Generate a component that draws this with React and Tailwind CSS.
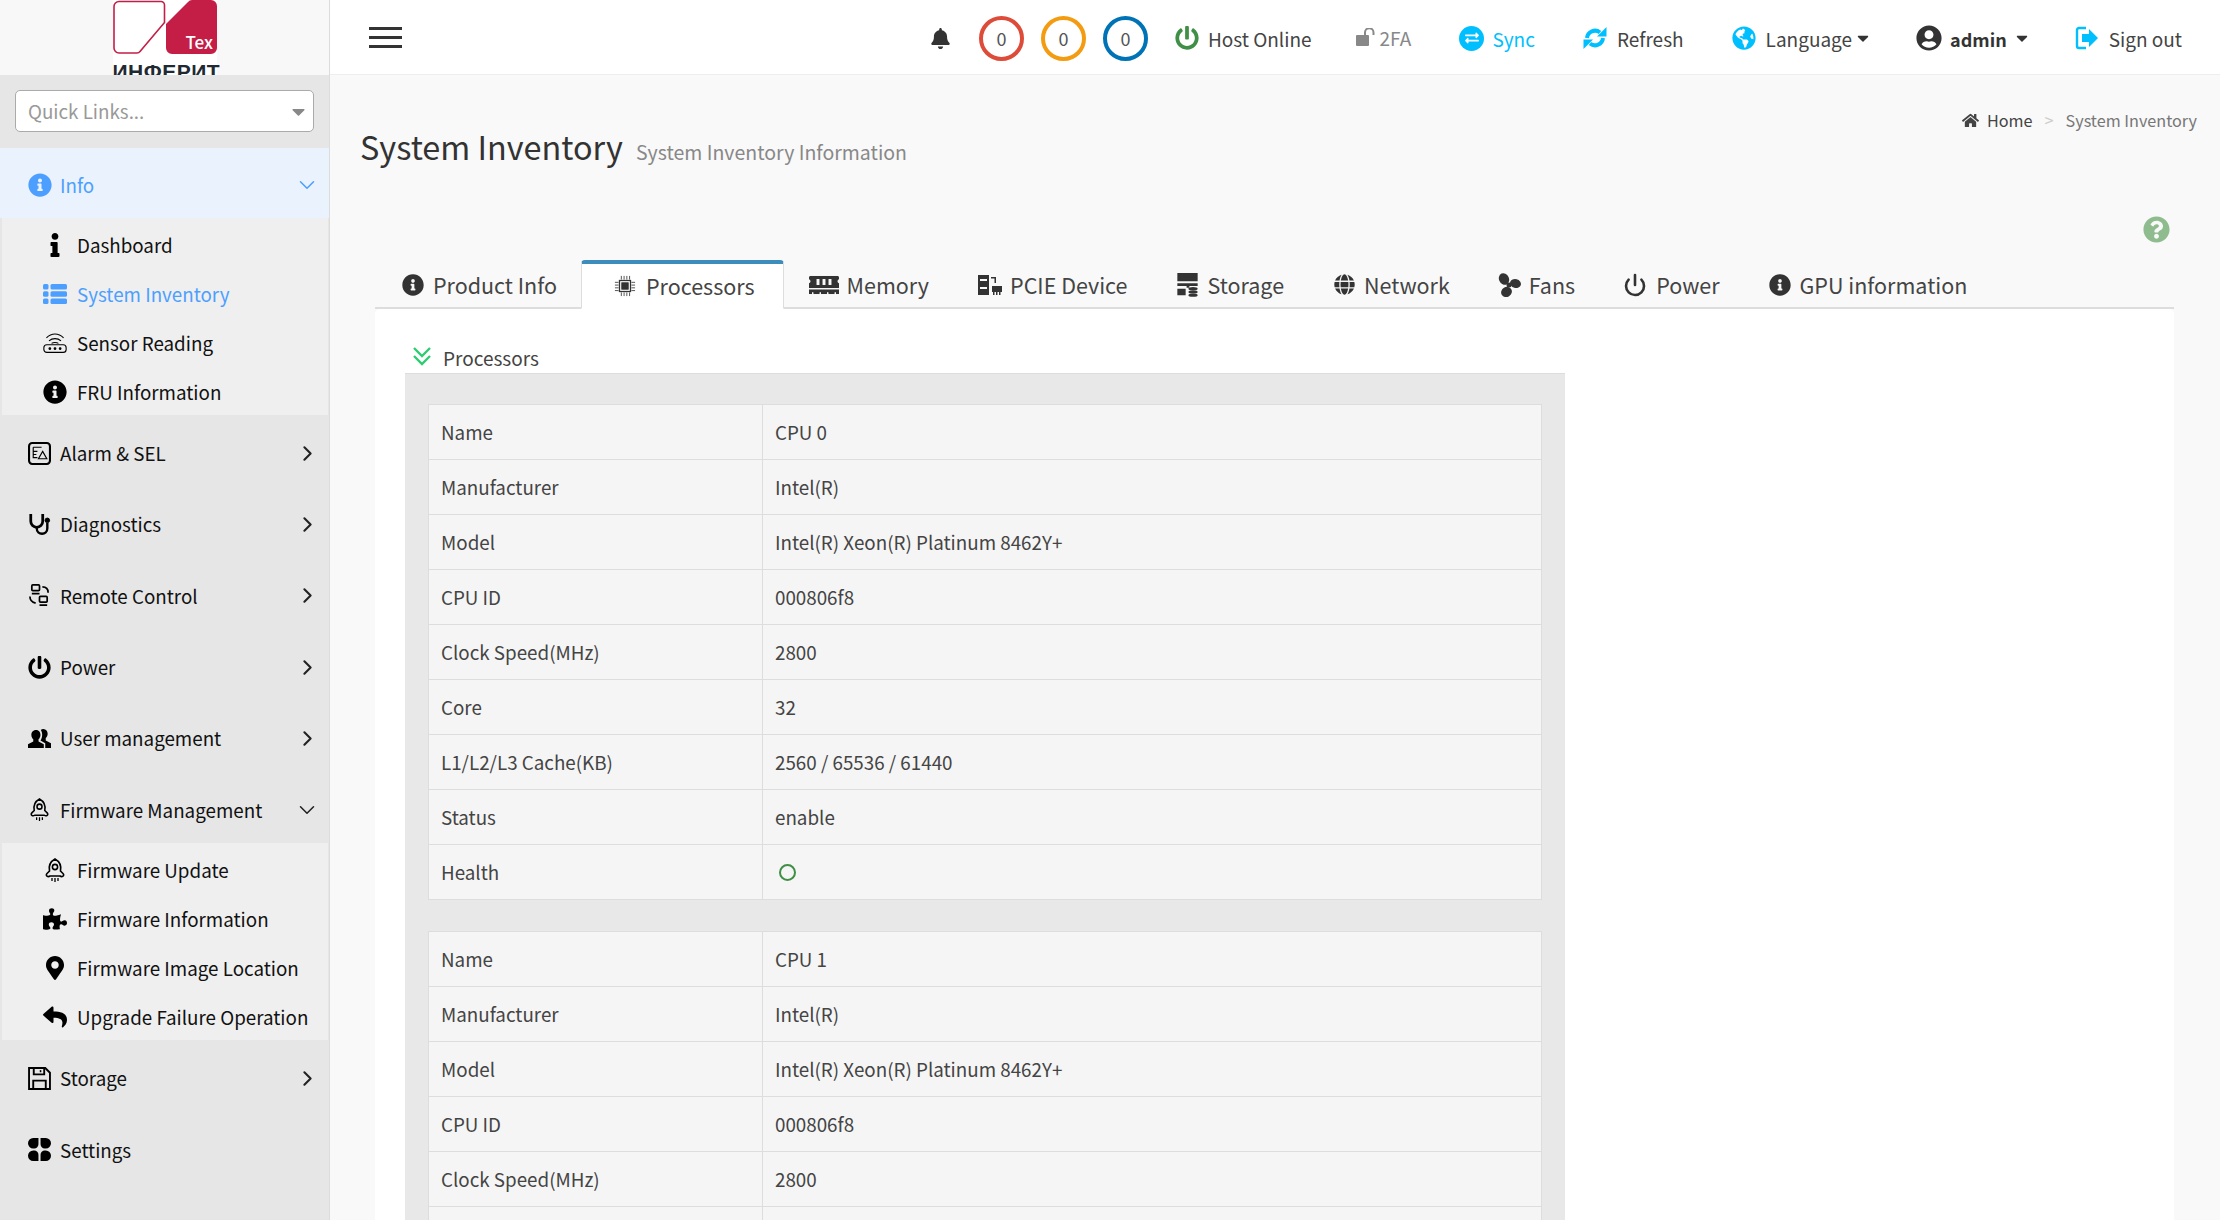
import React from 'react';
import {
  FaInfoCircle, FaInfo, FaBell, FaPowerOff, FaExchangeAlt,
  FaGlobeAmericas, FaUserCircle, FaHome, FaQuestionCircle, FaMemory, FaGlobe,
  FaPuzzlePiece, FaMapMarkerAlt, FaReply, FaCaretDown,
} from 'react-icons/fa';
import { ChevronDown, ChevronRight, Power } from 'lucide-react';

const ListIcon = (props) => (
  <svg viewBox="0 0 24 24" fill="currentColor" {...props}>
    <rect x="0" y="2" width="5.500" height="5.500" rx="1.500" />
    <rect x="7.500" y="2" width="16.500" height="5.500" rx="1.500" />
    <rect x="0" y="9.300" width="5.500" height="5.500" rx="1.500" />
    <rect x="7.500" y="9.300" width="16.500" height="5.500" rx="1.500" />
    <rect x="0" y="16.500" width="5.500" height="5.500" rx="1.500" />
    <rect x="7.500" y="16.500" width="16.500" height="5.500" rx="1.500" />
  </svg>
);

const RouterIcon = (props) => (
  <svg viewBox="0 0 28 24" fill="none" stroke="currentColor" strokeWidth="1.300" {...props}>
    <rect x="1" y="14" width="26" height="9" rx="3.500" />
    <circle cx="8" cy="18.500" r="1" fill="currentColor" />
    <circle cx="14" cy="18.500" r="1" fill="currentColor" />
    <circle cx="20" cy="18.500" r="1" fill="currentColor" />
    <path d="M7 9.500c4-3.500 10-3.500 14 0M4 6c6-6 14-6 20 0M10 12.500c2-1.500 6-1.500 8 0" />
  </svg>
);

const AlarmIcon = (props) => (
  <svg viewBox="0 0 22 22" fill="none" stroke="currentColor" {...props}>
    <rect x="1" y="1" width="20" height="20" rx="3" strokeWidth="2" />
    <path d="M5 5h8M5 5v10h4M5 9h4M5 12h3" strokeWidth="1.100" />
    <path d="M14 9l4 7h-8z" strokeWidth="1.100" />
  </svg>
);

const StethIcon = (props) => (
  <svg viewBox="0 0 24 25" fill="none" stroke="currentColor" strokeWidth="3" {...props}>
    <path d="M2.500 1v8a6.500 6.500 0 0 0 13 0V1" />
    <path d="M9 15.500v1c0 8 11.500 8 11.500 0V11" strokeWidth="2.600" />
    <circle cx="20.500" cy="8" r="2.500" fill="currentColor" strokeWidth="1" />
  </svg>
);

const RemoteIcon = (props) => (
  <svg viewBox="0 0 22 24" fill="none" stroke="currentColor" strokeWidth="1.800" {...props}>
    <rect x="3" y="1" width="8" height="6" rx="1" />
    <rect x="11" y="13" width="8" height="6" rx="1" />
    <path d="M3 10h8M11 22h8M14 3c4 0 6 2 6 6M1 13c0 4 2 6 6 7" />
  </svg>
);

const RocketIcon = (props) => (
  <svg viewBox="0 0 22 24" fill="none" stroke="currentColor" strokeWidth="1.600" {...props}>
    <path d="M11 1c4.500 2.500 6.500 7 5.500 12l2.500 2.500c2 2-1 4-3 2.500H6C4 19.500 1 17.500 3 15.500L5.500 13C4.500 8 6.500 3.500 11 1z" />
    <circle cx="11" cy="9" r="2.600" />
    <path d="M8 20v3M11 20v4M14 20v3" strokeWidth="1.300" />
  </svg>
);

const PetalsIcon = (props) => (
  <svg viewBox="0 0 22 22" fill="currentColor" {...props}>
    <path d="M5 0h5v6a4 4 0 0 1-4 4H5a5 5 0 0 1 0-10zM17 0a5 5 0 0 1 0 10h-1a4 4 0 0 1-4-4V0zM5 22a5 5 0 0 1 0-10h1a4 4 0 0 1 4 4v6zM17 22h-5v-6a4 4 0 0 1 4-4h1a5 5 0 0 1 0 10z" />
  </svg>
);

const FloppyIcon = (props) => (
  <svg viewBox="0 0 22 22" fill="none" stroke="currentColor" strokeWidth="1.800" {...props}>
    <path d="M1 1h15.500L21 5.500V21H1z" />
    <path d="M5.500 1v6h10V1M5 21v-8h12v8" />
    <path d="M12 3v2" strokeWidth="1.500" />
  </svg>
);

const UsersIcon = (props) => (
  <svg viewBox="0 0 24 22" fill="currentColor" {...props}>
    <g transform="translate(24 0) scale(-1 1)">
      <path d="M15.500 2c-3 0-4.500 2.500-4.500 5 0 2 .8 3.700 2 4.800V14l-5.500 3v4H24v-4l-5.500-3v-2.200c1.200-1.100 2-2.800 2-4.800 0-2.500-1.500-5-5-5z" />
      <path d="M8 1C5 1 3.500 3.300 3.500 6c0 2 .8 3.500 2 4.500V13L0 16v5h6v-5l5-3c-1-1.300-1.800-3.500-1.800-6 0-2 .5-3.500 1.500-5C10 1.300 9 1 8 1z" />
    </g>
  </svg>
);

const ChipIcon = (props) => (
  <svg viewBox="0 0 24 24" fill="none" stroke="currentColor" {...props}>
    <rect x="6" y="6" width="12" height="12" strokeWidth="1.400" />
    <rect x="8.500" y="8.500" width="7" height="7" fill="currentColor" />
    <path d="M8 1v4M11 1v4M14 1v4M17 1v4M8 19v4M11 19v4M14 19v4M17 19v4M1 8h4M1 11h4M1 14h4M1 17h4M19 8h4M19 11h4M19 14h4M19 17h4" strokeWidth="0.900" />
  </svg>
);

const PcieIcon = (props) => (
  <svg viewBox="0 0 24 20" fill="currentColor" {...props}>
    <path d="M0 0h11v20H0zM2 4v2h7V4zM2 12v2h7v-2z" fillRule="evenodd" />
    <path d="M14 11h10v6H14z" />
    <path d="M13 2h5v6h-1.500V3.500H13zM15 17h1.500v3H15zM18 17h1.500v3H18zM21 17h1.500v3H21z" />
  </svg>
);

const StorageIcon = (props) => (
  <svg viewBox="0 0 24 26" fill="currentColor" {...props}>
    <path d="M1 0h22v9H1zM1 11h22v3H14v2h-3v-2H1zM1 17h9v7H1z" />
    <ellipse cx="18" cy="17" rx="5" ry="1.800" />
    <ellipse cx="18" cy="20.500" rx="5" ry="1.800" />
    <ellipse cx="18" cy="24" rx="5" ry="1.800" />
  </svg>
);

const FanIcon = (props) => (
  <svg viewBox="0 0 24 24" fill="currentColor" {...props}>
    <circle cx="12" cy="12" r="2.500" />
    <ellipse cx="7" cy="6" rx="5" ry="6" transform="rotate(-25 7 6)" />
    <ellipse cx="18.500" cy="10.500" rx="5.500" ry="4.500" transform="rotate(15 18.500 10.500)" />
    <ellipse cx="9.500" cy="19" rx="5.500" ry="5" transform="rotate(-30 9.500 19)" />
  </svg>
);

const RefreshIcon = (props) => (
  <svg viewBox="0 0 24 24" {...props}>
    <path d="M4 12A8 8 0 0 1 17 6.500M20 12A8 8 0 0 1 7 17.500" fill="none" stroke="currentColor" strokeWidth="4" />
    <path d="M14 10.500h9.500V1zM10 13.500H.5V23z" fill="currentColor" />
  </svg>
);

const SignOutIcon = (props) => (
  <svg viewBox="0 0 24 24" fill="none" {...props}>
    <path d="M11 2H4a2 2 0 0 0-2 2v16a2 2 0 0 0 2 2h7" stroke="currentColor" strokeWidth="2.400" />
    <path d="M7 8h7V3l9 9-9 9v-5H7z" fill="currentColor" />
  </svg>
);

const LockOpenIcon = (props) => (
  <svg viewBox="0 0 19 18" fill="none" {...props}>
    <rect x="0" y="7" width="13" height="11" rx="1" fill="currentColor" />
    <path d="M9 7V4.500a4 4 0 0 1 8.500 0V7" stroke="currentColor" strokeWidth="2" />
  </svg>
);

const DoubleChevronIcon = (props) => (
  <svg viewBox="0 0 20 20" fill="none" stroke="currentColor" strokeWidth="2.400" {...props}>
    <path d="M2 2l8 8 8-8M2 10l8 8 8-8" />
  </svg>
);

const mainMenu = [
  { label: 'Alarm & SEL', icon: AlarmIcon },
  { label: 'Diagnostics', icon: StethIcon },
  { label: 'Remote Control', icon: RemoteIcon },
  { label: 'Power', icon: FaPowerOff },
  { label: 'User management', icon: UsersIcon },
];

const infoItems = [
  { label: 'Dashboard', icon: FaInfo },
  { label: 'System Inventory', icon: ListIcon, active: true },
  { label: 'Sensor Reading', icon: RouterIcon },
  { label: 'FRU Information', icon: FaInfoCircle },
];

const firmwareItems = [
  { label: 'Firmware Update', icon: RocketIcon },
  { label: 'Firmware Information', icon: FaPuzzlePiece },
  { label: 'Firmware Image Location', icon: FaMapMarkerAlt },
  { label: 'Upgrade Failure Operation', icon: FaReply },
];

const tabs = [
  { label: 'Product Info', icon: FaInfoCircle, size: 'w-[22px] h-[22px] mr-[9px]', pad: 'pl-[25px] pr-[24px]' },
  { label: 'Processors', icon: ChipIcon, size: 'w-[22px] h-[22px] mr-[10px]', active: true },
  { label: 'Memory', icon: FaMemory, size: 'w-[30px] h-[24px] mr-[8px]', pad: 'pl-[25px] pr-[24px]' },
  { label: 'PCIE Device', icon: PcieIcon, size: 'w-[24px] h-[20px] mr-[8px]', pad: 'px-[25px]' },
  { label: 'Storage', icon: StorageIcon, size: 'w-[23px] h-[24px] mr-[8px]', pad: 'pl-[24px] pr-[25px]' },
  { label: 'Network', icon: FaGlobe, size: 'w-[21px] h-[21px] mr-[9px]', pad: 'pl-[25px] pr-[24px]' },
  { label: 'Fans', icon: FanIcon, size: 'w-[24px] h-[24px] mr-[8px]', pad: 'pl-[23px] pr-[24px]' },
  { label: 'Power', icon: Power, size: 'w-[24px] h-[24px] mr-[9px]', pad: 'pl-[24px] pr-[25px]' },
  { label: 'GPU information', icon: FaInfoCircle, size: 'w-[22px] h-[22px] mr-[9px]', pad: 'pl-[24px] pr-[25px]' },
];

const cpuRows = (name) => [
  ['Name', name],
  ['Manufacturer', 'Intel(R)'],
  ['Model', 'Intel(R) Xeon(R) Platinum 8462Y+'],
  ['CPU ID', '000806f8'],
  ['Clock Speed(MHz)', '2800'],
  ['Core', '32'],
  ['L1/L2/L3 Cache(KB)', '2560 / 65536 / 61440'],
  ['Status', 'enable'],
  ['Health', null],
];

const MenuRow = ({ label, icon: Icon, open, last }) => (
  <div className={`flex items-center pl-[28px] pr-[9px] pt-[5px] ${last ? 'h-[72px]' : 'h-[71.3px]'}`}>
    <span className="w-[32px] shrink-0">
      <Icon className="w-[23px] h-[23px] text-black" />
    </span>
    <span className="flex-1 text-[#111]">{label}</span>
    {label !== 'Settings' && (open
      ? <ChevronDown className="w-[26px] h-[26px] text-[#222]" strokeWidth={1.4} />
      : <ChevronRight className="w-[25px] h-[25px] text-[#222]" strokeWidth={2} />)}
  </div>
);

const SubMenu = ({ items, top }) => (
  <div className={`ml-[2px] mr-px h-[197px] bg-[#efefef] ${top}`}>
    {items.map((item) => (
      <div key={item.label} className="flex items-center h-[49px] pl-[39px]">
        <span className="w-[28px] mr-[8px] shrink-0 flex justify-center">
          <item.icon className={`w-[24px] h-[24px] ${item.active ? 'text-[#4d9fff]' : 'text-black'}`} />
        </span>
        <span className={item.active ? 'text-[#4d9fff]' : 'text-[#111]'}>{item.label}</span>
      </div>
    ))}
  </div>
);

const Sidebar = () => (
  <aside className="w-[330px] shrink-0 bg-[#e6e6e6] border-r border-[#dcdcdc] text-[18.8px] leading-[26px]">
    <div className="h-[75px] bg-[#f8f8f8] flex justify-center overflow-hidden">
      <div className="relative w-[104px] h-[75px] bg-white">
        <svg viewBox="0 0 104 54" className="w-[104px] h-[54px]">
          <path d="M6 1.500h42a3.500 3.500 0 0 1 3.500 3.500v17.500L27 51.500a4 4 0 0 1-3 1.500H6a5 5 0 0 1-5-5V6.500a5 5 0 0 1 5-5z" fill="#fff" stroke="#c41e47" strokeWidth="1.600" />
          <path d="M53 24L75 2a6 6 0 0 1 4-2h19a6 6 0 0 1 6 6v42a6 6 0 0 1-6 6H59a6 6 0 0 1-6-6z" fill="#c41e47" />
        </svg>
        <span className="absolute left-[73px] top-[32px] text-[17px] leading-[20px] font-medium text-white">Tex</span>
        <span className="absolute left-0 top-[60px] w-[104px] text-center text-[21px] leading-[24px] font-bold tracking-[0.5px] text-[#1f2a33] font-['Liberation_Sans',sans-serif]">ИНФЕРИТ</span>
      </div>
    </div>
    <div className="h-[73px] pt-[15px] px-[15px]">
      <div className="h-[42px] bg-white border border-[#aaa] rounded-[5px] flex items-center justify-between pl-[12px] pr-[4px] text-[#999]">
        <span>Quick Links...</span>
        <FaCaretDown className="w-[21px] h-[21px] text-[#888]" />
      </div>
    </div>
    <div className="h-[70px] pt-[4px] pl-[28px] pr-[9px] flex items-center bg-[#eaf2fe] text-[#4d9fff]">
      <FaInfoCircle className="w-[24px] h-[24px] mr-[8px]" />
      <span className="flex-1">Info</span>
      <ChevronDown className="w-[26px] h-[26px]" strokeWidth={1.4} />
    </div>
    <SubMenu items={infoItems} top="pt-[2px]" />
    {mainMenu.map((m) => <MenuRow key={m.label} {...m} />)}
    <MenuRow label="Firmware Management" icon={RocketIcon} open />
    <SubMenu items={firmwareItems} top="pt-[3px]" />
    <MenuRow label="Storage" icon={FloppyIcon} last />
    <MenuRow label="Settings" icon={PetalsIcon} />
  </aside>
);

const Counter = ({ color }) => (
  <span className={`w-[45px] h-[45px] rounded-full border-[4px] flex items-center justify-center text-[18px] text-[#555] ${color}`}>0</span>
);

const Topbar = () => (
  <header className="h-[75px] shrink-0 bg-white border-b border-[#eee] flex items-center pl-[39px] pr-[38px] text-[19px] leading-[26px] text-[#444]">
    <div className="flex flex-col gap-[6px]">
      <span className="block w-[33px] h-[3px] bg-[#333]"></span>
      <span className="block w-[33px] h-[3px] bg-[#333]"></span>
      <span className="block w-[33px] h-[3px] bg-[#333]"></span>
    </div>
    <div className="ml-auto flex items-center mt-[2px]">
      <FaBell className="w-[19px] h-[21px] text-[#333] mr-[29px]" />
      <div className="flex gap-[17px] mr-[27px]">
        <Counter color="border-[#dd4b39]" />
        <Counter color="border-[#f39c12]" />
        <Counter color="border-[#0073b7]" />
      </div>
      <FaPowerOff className="w-[24px] h-[24px] text-[#3f8f46] mr-[9px]" />
      <span className="mr-[44px] mt-[2px]">Host Online</span>
      <LockOpenIcon className="w-[19px] h-[18px] text-[#888] mr-[5px] -mt-[3px]" />
      <span className="text-[#888] mr-[48px]">2FA</span>
      <span className="w-[25px] h-[25px] rounded-full bg-[#00bfff] flex items-center justify-center mr-[8px]">
        <FaExchangeAlt className="w-[14px] h-[14px] text-white" />
      </span>
      <span className="text-[#00bfff] mr-[48px] mt-[2px]">Sync</span>
      <RefreshIcon className="w-[24px] h-[24px] text-[#00bfff] mr-[10px]" />
      <span className="mr-[48px] mt-[2px]">Refresh</span>
      <FaGlobeAmericas className="w-[24px] h-[24px] text-[#00bfff] mr-[10px]" />
      <span className="mt-[2px]">Language</span>
      <FaCaretDown className="w-[18px] h-[18px] text-[#333] ml-[2px] mr-[44px]" />
      <FaUserCircle className="w-[26px] h-[26px] text-[#333] mr-[8px]" />
      <span className="font-bold text-[18px] text-[#333] mt-[2px]">admin</span>
      <FaCaretDown className="w-[18px] h-[18px] text-[#333] ml-[6px] mr-[44px]" />
      <SignOutIcon className="w-[24px] h-[24px] text-[#00bfff] mr-[10px]" />
      <span className="mt-[2px]">Sign out</span>
    </div>
  </header>
);

const CpuTable = ({ name }) => (
  <table className="w-full border-collapse bg-[#f5f5f5] text-[#444] text-[18.8px] leading-[26px] table-fixed">
    <tbody>
      {cpuRows(name).map(([key, value]) => (
        <tr key={key} className="h-[55px]">
          <td className="w-[334px] border border-[#ddd] pl-[12px]">{key}</td>
          <td className="border border-[#ddd] pl-[12px]">
            {value ?? <span className="block ml-[4px] w-[17px] h-[17px] rounded-full border-2 border-[#3f8f46]"></span>}
          </td>
        </tr>
      ))}
    </tbody>
  </table>
);

export default function App() {
  return (
    <div className="flex h-[1220px] w-[2220px] overflow-hidden bg-[#f9f9f9] font-['Noto_Sans_CJK_JP','Noto_Sans',sans-serif]">
      <Sidebar />
      <main className="flex-1 flex flex-col min-w-0">
        <Topbar />
        <div className="flex-1 pl-[30px] pr-[46px] min-h-0">
          <div className="flex justify-between h-[84px]">
            <div className="pt-[49px] flex items-baseline">
              <h1 className="text-[32.4px] leading-[44px] text-[#333]">System Inventory</h1>
              <span className="ml-[13px] text-[19.5px] text-[#888]">System Inventory Information</span>
            </div>
            <div className="pt-[31px] flex items-center h-[60px] text-[16.2px] text-[#444] -mr-[23px]">
              <FaHome className="w-[17px] h-[17px] mr-[8px]" />
              <span>Home</span>
              <span className="mx-[12px] text-[#ccc]">&gt;</span>
              <span className="text-[#777]">System Inventory</span>
            </div>
          </div>
          <div className="flex justify-end h-[101px] pt-[57px] pr-[4px]">
            <FaQuestionCircle className="w-[27px] h-[27px] text-[#8fbc8f]" />
          </div>
          <div className="ml-[15px] flex h-[49px] border-b-2 border-[#ddd] pl-[2px]">
            {tabs.map((t) => (
              <div
                key={t.label}
                className={`flex items-center text-[21.5px] leading-[28px] text-[#444] ${t.active ? 'h-[49px] bg-white border border-[#ddd] border-b-white border-t-[4px] border-t-[#3c8dbc] rounded-t-[4px] pl-[32px] pr-[28px]' : `h-[47px] pt-[2px] ${t.pad}`}`}
              >
                <t.icon className={`${t.size} text-[#333]`} strokeWidth={t.icon === Power ? 2.6 : undefined} />
                <span>{t.label}</span>
              </div>
            ))}
          </div>
          <div className="ml-[15px] bg-white rounded-t-[5px] h-[1000px] pt-[34px] px-[30px]">
            <div className="flex items-center h-[30px] text-[19px] text-[#444]">
              <DoubleChevronIcon className="w-[20px] h-[20px] text-[#2ecc71] mr-[11px] -mt-[4px] ml-[7px]" />
              <span>Processors</span>
            </div>
            <div className="w-[1160px] bg-[#e8e8e8] border-t border-[#ddd] px-[23px] pt-[30px] flex flex-col gap-[31px]">
              <CpuTable name="CPU 0" />
              <CpuTable name="CPU 1" />
            </div>
          </div>
        </div>
      </main>
    </div>
  );
}
